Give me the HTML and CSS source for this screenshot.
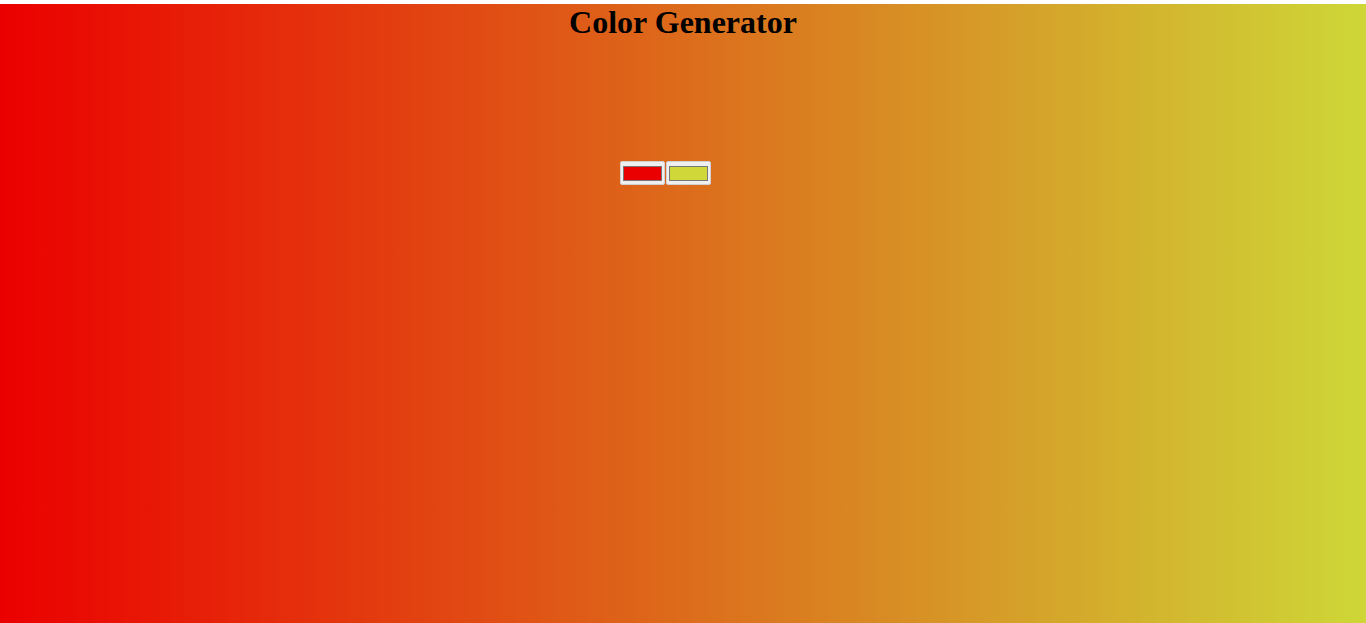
FILE: index.html
```html
<!DOCTYPE html>
<html>
<head>
<meta charset="utf-8">
<title>Color Generator</title>
<link rel="stylesheet" href="styles.css">
</head>
<body>
<div class="app">
  <h1 class="title">Color Generator</h1>
  <div class="pickers">
    <span class="picker"><span class="swatch swatch-red"></span></span>
    <span class="picker"><span class="swatch swatch-yellow"></span></span>
  </div>
</div>
</body>
</html>
```
FILE: styles.css
```css
html, body {
  margin: 0;
  padding: 0;
  background: #ffffff;
}
body {
  padding-top: 4px;
  font-family: "Liberation Serif", "Times New Roman", serif;
}
.app {
  height: 619px;
  background: linear-gradient(to right, #eb0000, #ced737);
  display: flex;
  flex-direction: column;
  align-items: center;
}
.title {
  margin: 0;
  font-size: 32px;
  font-weight: bold;
  color: #000;
  line-height: 37px;
}
.pickers {
  margin-top: 120px;
  display: flex;
  gap: 1px;
  padding-right: 35px;
}
.picker {
  box-sizing: border-box;
  width: 45px;
  height: 24px;
  background: #efefef;
  border: 1px solid #d0d0d0;
  border-radius: 2px;
  padding: 4px 2px 3px 2px;
  display: flex;
}
.swatch {
  flex: 1;
  border: 1px solid #777777;
}
.swatch-red { background: #ea0000; }
.swatch-yellow { background: #cfd838; }
```
